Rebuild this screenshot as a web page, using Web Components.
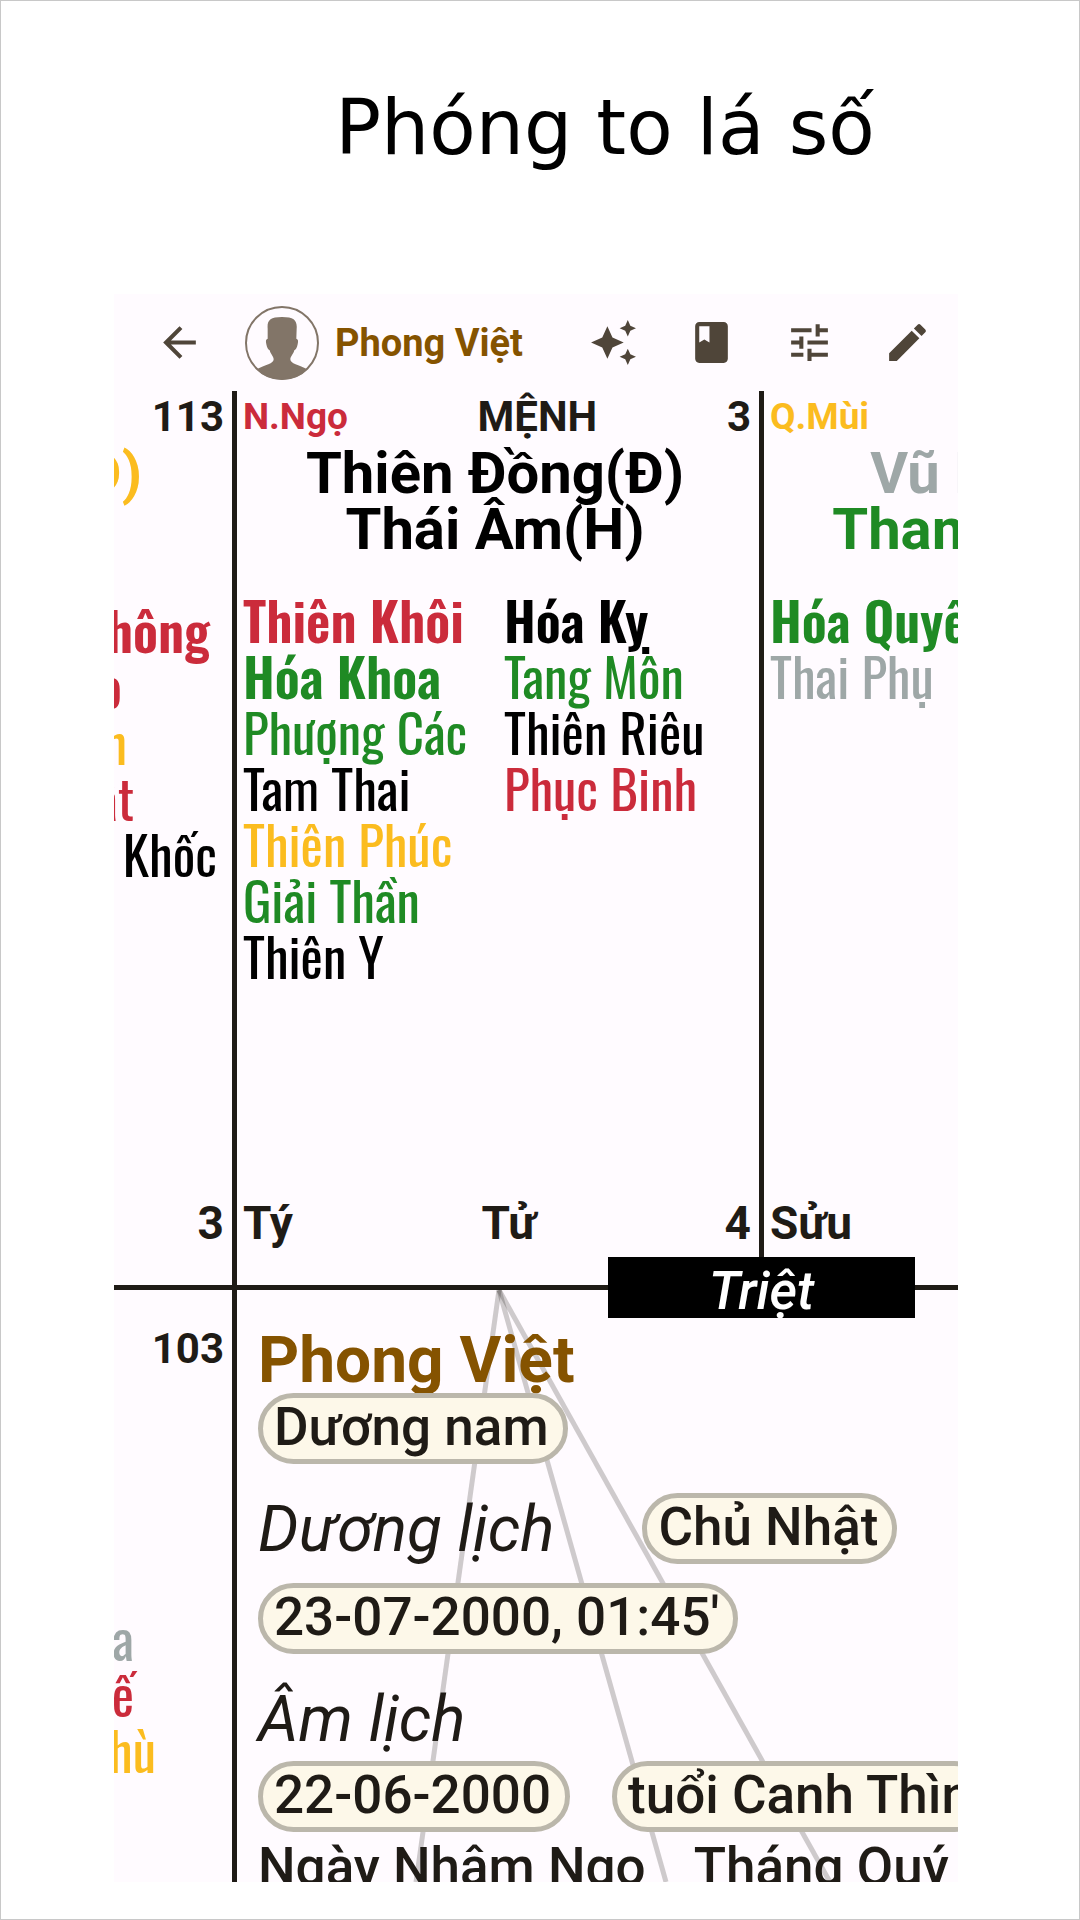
<!DOCTYPE html>
<html lang="vi">
<head>
<meta charset="utf-8">
<meta name="viewport" content="width=device-width, initial-scale=1">
<title>Phóng to lá số</title>
<style>
  html, body { margin: 0; }
  body { background: #fff; }
</style>
</head>
<body>
<promo-page>
  <span slot="title">Phóng to lá số</span>
  <app-bar slot="screen">Phong Việt</app-bar>
  <chart-board slot="screen"></chart-board>
</promo-page>

<script>
const define = (name, html, setup) => {
  const template = document.createElement('template');
  template.innerHTML = html;
  customElements.define(name, class extends HTMLElement {
    constructor() {
      super();
      this.attachShadow({ mode: 'open' }).append(template.content.cloneNode(true));
    }
    connectedCallback() { if (setup) setup(this, this.shadowRoot); }
  });
};

/* Framed page: a headline above the app screen */
define('promo-page', `
<style>
  :host { display: flex; flex-direction: column; box-sizing: border-box; min-height: 100vh;
    border: 1px solid #c8c8c8; background: #fff; }
  h1 { margin: 0; padding: 79px 0 118px 130px; text-align: center; color: #000;
    font: 400 76px/96px "DejaVu Sans", sans-serif; }
  main { flex: 1 0 0px; display: flex; flex-direction: column; margin: 0 121px 37px 113px;
    overflow: hidden; background: #fffbff; color: #1f1b16;
    font-family: Roboto, "Noto Sans", sans-serif; }
</style>
<h1><slot name="title"></slot></h1>
<main><slot name="screen"></slot></main>`);

const ICONS = {
  back: '<path d="M20 11H7.83l5.59-5.59L12 4l-8 8 8 8 1.41-1.41L7.83 13H20z"/>',
  sparkle: '<path d="M19 9l1.25-2.75L23 5l-2.75-1.25L19 1l-1.25 2.75L15 5l2.75 1.25zM11.5 9.5L9 4 6.500 9.500 1 12l5.500 2.500L9 20l2.500-5.500L17 12zM19 15l-1.250 2.750L15 19l2.750 1.250L19 23l1.250-2.750L23 19l-2.750-1.250z"/>',
  book: '<path fill-rule="evenodd" d="M18 2H6c-1.100 0-2 .9-2 2v16c0 1.100.9 2 2 2h12c1.100 0 2-.9 2-2V4c0-1.100-.9-2-2-2zM6 4h5v8l-2.500-1.500L6 12z"/>',
  tune: '<path d="M3 17v2h6v-2H3zM3 5v2h10V5H3zm10 16v-2h8v-2h-8v-2h-2v6h2zM7 9v2H3v2h4v2h2V9H7zm14 4v-2H11v2h10zm-6-4h2V7h4V5h-4V3h-2v6z"/>',
  edit: '<path d="M3 17.250V21h3.750L17.810 9.940l-3.750-3.750L3 17.250zM20.710 7.040c.39-.39.39-1.020 0-1.410l-2.340-2.340c-.39-.39-1.020-.39-1.410 0l-1.830 1.830 3.750 3.750 1.830-1.830z"/>'
};

define('icon-button', `
<style>
  :host { display: block; }
  button { display: grid; place-items: center; width: 98px; height: 97px; margin: 0; padding: 0;
    border: 0; background: none; color: #4f4539; }
  svg { display: block; width: 49px; height: 49px; fill: currentColor; }
</style>
<button type="button"><svg viewBox="0 0 24 24" aria-hidden="true"></svg></button>`,
(el, root) => {
  root.querySelector('svg').innerHTML = ICONS[el.getAttribute('icon')];
  root.querySelector('button').setAttribute('aria-label', el.getAttribute('label'));
});

define('app-bar', `
<style>
  :host { display: flex; flex: none; align-items: center; height: 97px; padding: 0 2px 0 16px; }
  .avatar { display: block; flex: none; width: 74px; height: 74px; margin: 0 16px 0 17px; }
  h2 { flex: 1; margin: 0; white-space: nowrap; color: #855300; font-size: 38px; line-height: 44px; font-weight: 700; }
</style>
<icon-button icon="back" label="Quay lại"></icon-button>
<svg class="avatar" viewBox="0 0 222 222" aria-hidden="true">
  <clipPath id="disc"><circle cx="111" cy="111" r="110"/></clipPath>
  <path clip-path="url(#disc)" fill="#827568" d="M68 68C66 44 74 33 111 33s46 11 44 35l-1 30c6 2 6 7 4 17-2 11-5 15-10 18-3 12-12 18-12 27 0 14 24 15 54 32v40H32v-40c30-17 54-18 54-32 0-9-9-15-12-27-5-3-8-7-10-18-2-10-2-15 4-17z"/>
  <circle cx="111" cy="111" r="108" fill="none" stroke="#827568" stroke-width="6"/>
</svg>
<h2><slot></slot></h2>
<icon-button icon="sparkle" label="Luận giải"></icon-button>
<icon-button icon="book" label="Sổ lá số"></icon-button>
<icon-button icon="tune" label="Tùy chỉnh"></icon-button>
<icon-button icon="edit" label="Chỉnh sửa"></icon-button>`);

/* One minor star; its colour shows the element it belongs to */
define('minor-star', `
<style>
  :host { display: flex; white-space: nowrap; color: #000; height: 56px;
    font: 400 53px/56px Oswald, "Roboto Condensed", "Liberation Sans Narrow", sans-serif; }
  :host([strong]) { font-weight: 600; }
  :host([hue=fire]) { color: #cb2b3b; }
  :host([hue=wood]) { color: #1f8a24; }
  :host([hue=earth]) { color: #fbbc1f; }
  :host([hue=metal]) { color: #9ea7a7; }
  :host([cut]) { justify-content: flex-end; width: var(--shown); }
</style>
<slot></slot>`);

define('palace-cell', `
<style>
  :host { display: flex; flex-direction: column; box-sizing: border-box; min-width: 0; min-height: 0; overflow: hidden; }
  .row { display: flex; justify-content: space-between; align-items: center; padding: 0 8px 0 6px; white-space: nowrap; }
  .top { line-height: 52px; font-size: 42px; font-weight: 700; }
  .names { display: flex; flex-direction: column; align-items: center; min-height: 112px; margin: 2px 6px 34px 0;
    font-size: 58px; line-height: 56px; font-weight: 700; white-space: nowrap; color: #000; }
  .stars { flex: 1; display: grid; grid-template-columns: 1fr 1fr; align-items: start; }
  .stars > div { padding-left: 6px; }
  .bottom { font-size: 46px; line-height: 60px; font-weight: 700; padding-bottom: 32px; }
  :host([edge=start]) .row { justify-content: flex-end; }
  :host([edge=start]) .names { align-items: flex-start; margin: 2px 0 44px; }
  :host([edge=start]) .stars { grid-template-columns: 1fr; }
  :host([edge=start]) .stars > div { padding-left: 0; }
  :host([edge=end]) .row { justify-content: flex-start; }
  :host([edge=end]) .names { width: 520px; }
  ::slotted([slot=stem]) { font-size: 37px; }
</style>
<div class="row top"><slot name="stem"></slot><slot name="house"></slot><slot name="age"></slot></div>
<div class="names"><slot name="name"></slot></div>
<div class="stars"><div><slot name="good"></slot></div><div><slot name="bad"></slot></div></div>
<div class="row bottom"><slot name="branch"></slot><slot name="phase"></slot><slot name="month"></slot></div>`);

define('info-chip', `
<style>
  :host { display: block; flex: none; box-sizing: border-box; height: 71px; padding: 0 14px 0 11px; border: 5px solid #bbb7ab;
    border-radius: 36px; background: #fdf8e9; white-space: nowrap; font-size: 53px; line-height: 58px; font-weight: 500; }
</style>
<slot></slot>`);

define('person-panel', `
<style>
  :host { display: block; position: relative; overflow: hidden; }
  svg { position: absolute; inset: 0; width: 100%; height: 100%; }
  .body { position: relative; padding: 39px 0 0 21px; white-space: nowrap; }
  h3 { margin: 0; color: #855300; font-size: 64px; line-height: 64px; font-weight: 700; }
  .row { display: flex; }
  .gap { margin-top: 29px; }
  .near { margin-top: 19px; }
  .split { gap: 42px; margin-top: 7px; }
  .wide { gap: 88px; }
  em { font-size: 64px; line-height: 74px; height: 71px; font-weight: 400; }
  .days { gap: 48px; margin-top: 5px; font-size: 53px; line-height: 60px; font-weight: 500; }
</style>
<svg aria-hidden="true" fill="none" stroke="#1f1b16" stroke-opacity=".22" stroke-width="5">
  <path d="M262 0L179 592"/><path d="M262 0L429 592"/><path d="M262 0L593 592"/>
</svg>
<div class="body">
  <h3>Phong Việt</h3>
  <div class="row"><info-chip>Dương nam</info-chip></div>
  <div class="row gap wide"><em>Dương lịch</em><info-chip>Chủ Nhật</info-chip></div>
  <div class="row near"><info-chip>23-07-2000, 01:45'</info-chip></div>
  <div class="row gap"><em>Âm lịch</em></div>
  <div class="row split"><info-chip>22-06-2000</info-chip><info-chip>tuổi Canh Thìn</info-chip></div>
  <div class="row days"><span>Ngày Nhâm Ngọ</span><span>Tháng Quý</span></div>
</div>`);

define('chart-board', `
<style>
  :host { flex: 1 0 0px; display: grid; position: relative; overflow: hidden; min-height: 0;
    grid-template-columns: 123px 527px minmax(0, 1fr); grid-template-rows: minmax(0, 152fr) minmax(0, 100fr); }
  .ruled { border-right: 5px solid #1f1b16; }
  .floor { border-bottom: 5px solid #1f1b16; }
  .red { color: #cb2b3b; } .yellow { color: #fbbc1f; } .green { color: #1f8a24; } .grey { color: #9ea7a7; }
  .cut { display: flex; justify-content: flex-end; width: var(--shown); }
  .lower { padding-top: 33px; }
  .tail { display: block; padding-top: 76px; }
  person-panel { grid-column: 2 / 4; }
  .void { grid-area: 1 / 2 / 2 / 3; position: absolute; right: -151px; bottom: -28px; width: 307px; height: 61px;
    overflow: hidden; background: #000; color: #fff; text-align: center; font-size: 53px; line-height: 68px;
    font-style: italic; font-weight: 500; }
</style>
<palace-cell edge="start" class="ruled floor">
  <span slot="age">113</span>
  <span slot="name" class="yellow cut" style="--shown:28px">Đ)</span>
  <minor-star slot="good" cut hue="fire" strong style="--shown:96px">hông</minor-star>
  <minor-star slot="good" cut hue="fire" style="--shown:8px">o</minor-star>
  <minor-star slot="good" cut hue="earth" style="--shown:13px">n</minor-star>
  <minor-star slot="good" cut hue="fire" style="--shown:20px">ât</minor-star>
  <minor-star slot="good" cut style="--shown:103px">Khốc</minor-star>
  <span slot="month">3</span>
</palace-cell>
<palace-cell class="ruled floor">
  <span slot="stem" class="red">N.Ngọ</span><span slot="house">MỆNH</span><span slot="age">3</span>
  <span slot="name">Thiên Đồng(Đ)</span><span slot="name">Thái Âm(H)</span>
  <minor-star slot="good" hue="fire" strong>Thiên Khôi</minor-star>
  <minor-star slot="good" hue="wood" strong>Hóa Khoa</minor-star>
  <minor-star slot="good" hue="wood">Phượng Các</minor-star>
  <minor-star slot="good">Tam Thai</minor-star>
  <minor-star slot="good" hue="earth">Thiên Phúc</minor-star>
  <minor-star slot="good" hue="wood">Giải Thần</minor-star>
  <minor-star slot="good">Thiên Y</minor-star>
  <minor-star slot="bad" strong>Hóa Kỵ</minor-star>
  <minor-star slot="bad" hue="wood">Tang Môn</minor-star>
  <minor-star slot="bad">Thiên Riêu</minor-star>
  <minor-star slot="bad" hue="fire">Phục Binh</minor-star>
  <span slot="branch">Tý</span><span slot="phase">Tử</span><span slot="month">4</span>
</palace-cell>
<palace-cell edge="end" class="floor">
  <span slot="stem" class="yellow">Q.Mùi</span>
  <span slot="name" class="grey">Vũ Khúc(M)</span><span slot="name" class="green">Tham Lang(M)</span>
  <minor-star slot="good" hue="wood" strong>Hóa Quyền</minor-star>
  <minor-star slot="good" hue="metal">Thai Phụ</minor-star>
  <span slot="branch">Sửu</span>
</palace-cell>
<palace-cell edge="start" class="ruled lower">
  <span slot="age">103</span>
  <span slot="good" class="tail"></span>
  <minor-star slot="good" cut hue="metal" style="--shown:20px">a</minor-star>
  <minor-star slot="good" cut hue="fire" style="--shown:20px">ế</minor-star>
  <minor-star slot="good" cut hue="earth" style="--shown:42px">hù</minor-star>
</palace-cell>
<person-panel></person-panel>
<div class="void">Triệt</div>`);
</script>
</body>
</html>
